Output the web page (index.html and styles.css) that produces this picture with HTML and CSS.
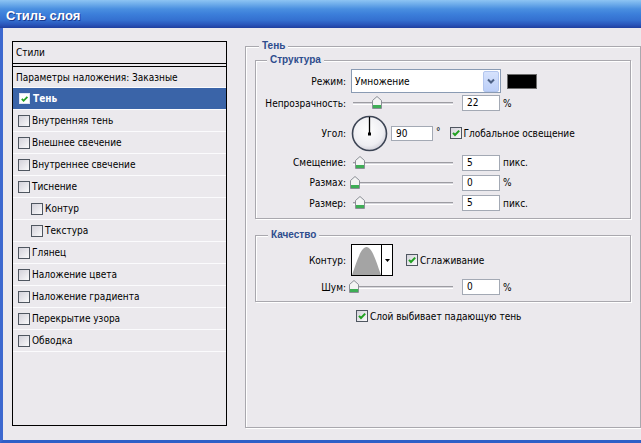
FILE: index.html
```html
<!DOCTYPE html>
<html lang="ru">
<head>
<meta charset="utf-8">
<title>Стиль слоя</title>
<link rel="stylesheet" href="styles.css">
</head>
<body>
<div class="window">
  <div class="titlebar"><span class="title">Стиль слоя</span></div>
  <div class="frame">
    <div class="styles-panel">
      <div class="styles-head">Стили</div>
      <ul class="styles-list">
        <li class="item blend">Параметры наложения: Заказные</li>
        <li class="item selected"><span class="cb on"><svg width="10" height="10" viewBox="0 0 10 10"><path d="M2 4.8 L4 7 L8.2 2.6" fill="none" stroke="#21a121" stroke-width="2"/></svg></span>Тень</li>
        <li class="item"><span class="cb"></span>Внутренняя тень</li>
        <li class="item"><span class="cb"></span>Внешнее свечение</li>
        <li class="item"><span class="cb"></span>Внутреннее свечение</li>
        <li class="item"><span class="cb"></span>Тиснение</li>
        <li class="item sub"><span class="cb"></span>Контур</li>
        <li class="item sub"><span class="cb"></span>Текстура</li>
        <li class="item"><span class="cb"></span>Глянец</li>
        <li class="item"><span class="cb"></span>Наложение цвета</li>
        <li class="item"><span class="cb"></span>Наложение градиента</li>
        <li class="item"><span class="cb"></span>Перекрытие узора</li>
        <li class="item"><span class="cb"></span>Обводка</li>
      </ul>
    </div>

    <fieldset class="group effect">
      <legend>Тень</legend>

      <fieldset class="group structure">
        <legend>Структура</legend>
        <div class="frow r-mode">
          <span class="lbl">Режим:</span>
          <div class="select">
            <span class="select-text">Умножение</span>
            <span class="drop"><svg width="8" height="6" viewBox="0 0 8 6"><path d="M1 1.5 L4 4.5 L7 1.5" fill="none" stroke="#4d6185" stroke-width="2"/></svg></span>
          </div>
          <span class="swatch"></span>
        </div>
        <div class="frow r-opacity">
          <span class="lbl">Непрозрачность:</span>
          <div class="slider"><span class="track"></span><span class="thumb" style="left:24px"><svg width="10" height="13" viewBox="0 0 10 13"><path d="M0.5 4.5 L5 0.5 L9.5 4.5 V12.5 H0.5 Z" fill="#f4f4f4" stroke="#8b8f96"/><rect x="1" y="9" width="8" height="3" fill="#3eae55"/></svg></span></div>
          <span class="field">22</span><span class="unit">%</span>
        </div>
        <div class="frow r-angle">
          <span class="lbl">Угол:</span>
          <svg class="dial" width="37" height="37" viewBox="0 0 37 37">
            <defs><radialGradient id="dg" cx="45%" cy="40%" r="65%"><stop offset="0" stop-color="#ffffff"/><stop offset="0.7" stop-color="#eeeef2"/><stop offset="1" stop-color="#c9c8d2"/></radialGradient></defs>
            <circle cx="18.5" cy="18.5" r="17" fill="url(#dg)" stroke="#3c4454" stroke-width="1.6"/>
            <line x1="18.5" y1="19" x2="18.5" y2="2" stroke="#000" stroke-width="1.3"/>
            <rect x="17" y="17.5" width="3" height="3" fill="#000"/>
          </svg>
          <span class="field angle">90</span><span class="deg">°</span>
          <span class="cb on global"><svg width="10" height="10" viewBox="0 0 10 10"><path d="M2 4.8 L4 7 L8.2 2.6" fill="none" stroke="#21a121" stroke-width="2"/></svg></span><span class="cb-text">Глобальное освещение</span>
        </div>
        <div class="frow r-off">
          <span class="lbl">Смещение:</span>
          <div class="slider"><span class="track"></span><span class="thumb" style="left:7px"><svg width="10" height="13" viewBox="0 0 10 13"><path d="M0.5 4.5 L5 0.5 L9.5 4.5 V12.5 H0.5 Z" fill="#f4f4f4" stroke="#8b8f96"/><rect x="1" y="9" width="8" height="3" fill="#3eae55"/></svg></span></div>
          <span class="field">5</span><span class="unit">пикс.</span>
        </div>
        <div class="frow r-spread">
          <span class="lbl">Размах:</span>
          <div class="slider"><span class="track"></span><span class="thumb" style="left:2px"><svg width="10" height="13" viewBox="0 0 10 13"><path d="M0.5 4.5 L5 0.5 L9.5 4.5 V12.5 H0.5 Z" fill="#f4f4f4" stroke="#8b8f96"/><rect x="1" y="9" width="8" height="3" fill="#3eae55"/></svg></span></div>
          <span class="field">0</span><span class="unit">%</span>
        </div>
        <div class="frow r-size">
          <span class="lbl">Размер:</span>
          <div class="slider"><span class="track"></span><span class="thumb" style="left:7px"><svg width="10" height="13" viewBox="0 0 10 13"><path d="M0.5 4.5 L5 0.5 L9.5 4.5 V12.5 H0.5 Z" fill="#f4f4f4" stroke="#8b8f96"/><rect x="1" y="9" width="8" height="3" fill="#3eae55"/></svg></span></div>
          <span class="field">5</span><span class="unit">пикс.</span>
        </div>
      </fieldset>

      <fieldset class="group quality">
        <legend>Качество</legend>
        <div class="frow r-contour">
          <span class="lbl">Контур:</span>
          <div class="contour">
            <span class="curve"><svg width="29" height="30" viewBox="0 0 29 30"><path d="M0 30 C 5 16, 9 2, 14.5 2 C 20 2, 24 16, 29 30 Z" fill="#a4a4a4"/></svg></span>
            <span class="contour-drop"><svg width="5" height="3" viewBox="0 0 5 3"><path d="M0 0 H5 L2.5 3 Z" fill="#000"/></svg></span>
          </div>
          <span class="cb on smooth"><svg width="10" height="10" viewBox="0 0 10 10"><path d="M2 4.8 L4 7 L8.2 2.6" fill="none" stroke="#21a121" stroke-width="2"/></svg></span><span class="cb-text">Сглаживание</span>
        </div>
        <div class="frow r-noise">
          <span class="lbl">Шум:</span>
          <div class="slider"><span class="track"></span><span class="thumb" style="left:1px"><svg width="10" height="13" viewBox="0 0 10 13"><path d="M0.5 4.5 L5 0.5 L9.5 4.5 V12.5 H0.5 Z" fill="#f4f4f4" stroke="#8b8f96"/><rect x="1" y="9" width="8" height="3" fill="#3eae55"/></svg></span></div>
          <span class="field">0</span><span class="unit">%</span>
        </div>
      </fieldset>

      <div class="knockout"><span class="cb on"><svg width="10" height="10" viewBox="0 0 10 10"><path d="M2 4.8 L4 7 L8.2 2.6" fill="none" stroke="#21a121" stroke-width="2"/></svg></span><span class="cb-text">Слой выбивает падающую тень</span></div>
    </fieldset>
  </div>
</div>
</body>
</html>
```

FILE: styles.css
```css
* { box-sizing: border-box; }

html, body {
  margin: 0;
  padding: 0;
}

body {
  width: 641px;
  height: 443px;
  overflow: hidden;
  background: #ebe9ed;
  font-family: "DejaVu Sans Condensed", "DejaVu Sans", sans-serif;
  font-stretch: condensed;
  font-size: 10px;
  color: #000;
}

.window {
  width: 641px;
  height: 443px;
  display: flex;
  flex-direction: column;
}

.titlebar {
  flex: none;
  height: 28px;
  padding: 3px 0 0 6px;
  display: flex;
  align-items: center;
  background: linear-gradient(#8ec4f3 0, #74b1ec 12%, #4a8fe0 32%, #3c7fda 50%, #3470d0 72%, #2a56bb 88%, #1f3f9f 100%);
}

.title {
  color: #fff;
  font-family: "Liberation Sans", sans-serif;
  font-stretch: normal;
  font-weight: bold;
  font-size: 13px;
  text-shadow: 1px 1px 0 #1b3b8f;
}

.frame {
  flex: 1;
  display: flex;
  align-items: flex-start;
  padding: 11px 0 0 9px;
  border-left: 3px solid #3c68cf;
  border-bottom: 3px solid #2f5fc7;
  background: #ebe9ed;
}

/* ---------- left styles list ---------- */
.styles-panel {
  flex: none;
  margin-top: 2px;
  width: 215px;
  height: 385px;
  border: 1px solid #000;
  background: #ebe9ed;
}

.styles-head {
  height: 22px;
  padding-left: 3px;
  display: flex;
  align-items: center;
  border-bottom: 1px solid #000;
  margin-bottom: 2px;
}

.styles-list {
  list-style: none;
  margin: 0;
  padding: 0;
  border-top: 1px solid #000;
}

.item {
  height: 22px;
  display: flex;
  align-items: center;
  padding-left: 5px;
  border-bottom: 1px solid #fbfbfd;
  white-space: nowrap;
}

.item.blend {
  height: 21px;
  padding-left: 3px;
}

.item.sub {
  padding-left: 18px;
}

.item.selected {
  background: #3a64a8;
  color: #fff;
  font-weight: bold;
}

/* ---------- checkbox ---------- */
.cb {
  flex: none;
  width: 12px;
  height: 12px;
  margin-right: 2px;
  border: 1px solid #4f5660;
  background: linear-gradient(135deg, #d3d2da 0%, #e6e5ea 50%, #fafafb 100%);
  display: flex;
  align-items: center;
  justify-content: center;
}

.cb svg { display: block; }

.item.selected .cb {
  border-color: #dfe6f2;
  background: #fff;
  width: 11px;
  height: 11px;
  margin-left: 1px;
  margin-right: 3px;
}

/* ---------- group boxes ---------- */
.group {
  margin: 0;
  padding: 0;
  min-width: 0;
  border: 1px solid #a9a8ae;
  box-shadow: inset 1px 1px 0 #fff, 1px 1px 0 #fff;
}

.group > legend {
  padding: 0 3px;
  line-height: 14px;
  font-family: "Liberation Sans", sans-serif;
  font-stretch: normal;
  font-weight: bold;
  font-size: 10px;
  color: #2e4d8d;
  background: #ebe9ed;
}

.effect {
  flex: none;
  margin-left: 18px;
  width: 396px;
  height: 389px;
  padding: 0 9px;
}

.effect > legend { margin-left: 4px; }

.structure {
  padding: 2px 0 5px 0;
}

.structure > legend { margin-left: 11px; }

.quality {
  margin-top: 9px;
  padding: 2px 0 5px 0;
}

.quality > legend { margin-left: 12px; }

/* ---------- form rows ---------- */
.frow {
  display: flex;
  align-items: center;
  height: 20px;
  white-space: nowrap;
}

.lbl {
  flex: none;
  width: 90px;
  text-align: right;
}

.r-mode { height: 24px; }
.r-opacity { height: 20px; }
.r-angle { height: 40px; }
.r-off { height: 19px; }
.r-spread { height: 21px; }
.r-size { height: 20px; }
.r-contour { height: 32px; }
.r-noise { height: 18px; margin-top: 2px; }

.select {
  margin-left: 5px;
  width: 150px;
  height: 24px;
  border: 1px solid #8a9bb3;
  background: #fff;
  display: flex;
  align-items: center;
  justify-content: space-between;
  padding: 0 1px 0 3px;
}

.drop {
  width: 16px;
  height: 21px;
  border: 1px solid #b3c6ee;
  border-radius: 2px;
  background: linear-gradient(#d6e2fc, #bccff8);
  display: flex;
  align-items: center;
  justify-content: center;
}

.drop svg { display: block; }

.swatch {
  margin-left: 6px;
  width: 30px;
  height: 15px;
  background: #000;
  border: 1px solid #6d6d6d;
}

.slider {
  position: relative;
  flex: none;
  margin-left: 2px;
  width: 107px;
  height: 14px;
}

.track {
  position: absolute;
  left: 5px;
  right: 2px;
  top: 6px;
  height: 3px;
  border-top: 1px solid #9c9ca2;
  border-bottom: 1px solid #fff;
  background: #d7d6dc;
}

.thumb {
  position: absolute;
  top: 0;
  width: 10px;
  height: 13px;
}

.thumb svg { display: block; }

.field {
  flex: none;
  margin-left: 7px;
  width: 38px;
  height: 16px;
  border: 1px solid #a3a9b4;
  background: #fff;
  padding-left: 4px;
  line-height: 14px;
}

.unit { margin-left: 3px; }

.dial {
  flex: none;
  display: block;
  margin-left: 5px;
}

.field.angle {
  margin-left: 3px;
  width: 42px;
  height: 15px;
  line-height: 13px;
}

.deg { margin-left: 3px; align-self: flex-start; margin-top: 13px; }

.cb.global { margin-left: 9px; }

.contour {
  flex: none;
  margin-left: 5px;
  width: 42px;
  height: 32px;
  border: 1px solid #000;
  display: flex;
}

.curve {
  width: 30px;
  height: 30px;
  background: #fff;
  border-right: 1px solid #000;
  display: flex;
  align-items: flex-end;
}

.curve svg { display: block; }

.contour-drop {
  flex: 1;
  background: #fff;
  display: flex;
  align-items: center;
  justify-content: center;
}

.contour-drop svg { display: block; }

.cb.smooth { margin-left: 13px; }

.knockout {
  margin: 7px 0 0 101px;
  height: 14px;
  display: flex;
  align-items: center;
  white-space: nowrap;
}
```
